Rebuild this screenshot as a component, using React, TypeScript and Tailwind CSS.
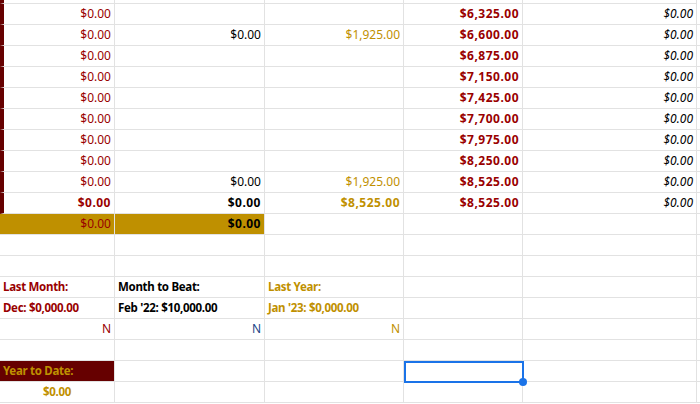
import React from 'react';

const RED = 'text-[#990000]';
const GOLD = 'text-[#bf9000]';

type Cell = { t?: string; c?: string; bg?: string };
type Row = Cell[];

const dCol = ['$6,325.00', '$6,600.00', '$6,875.00', '$7,150.00', '$7,425.00', '$7,700.00', '$7,975.00', '$8,250.00', '$8,525.00', '$8,525.00'];

const plain = 'font-["DejaVu_Sans",sans-serif] text-[12px] text-right';
const bold = 'font-["DejaVu_Sans",sans-serif] font-bold text-[12px] text-right tracking-[0.5px]';
const comic = 'font-["DejaVu_Sans",sans-serif] font-bold text-[11.5px] tracking-[-0.3px]';

const rows: Row[] = [];
for (let i = 0; i < 10; i++) {
  const withBC = i === 1 || i === 8;
  const isTotal = i === 9;
  rows.push([
    { t: '$0.00', c: `${isTotal ? bold : plain} ${RED}` },
    { t: withBC || isTotal ? '$0.00' : '', c: `${isTotal ? bold : plain} text-black` },
    { t: withBC ? '$1,925.00' : isTotal ? '$8,525.00' : '', c: `${isTotal ? bold : plain} ${GOLD}` },
    { t: dCol[i], c: `${bold} ${RED}` },
    { t: '$0.00', c: `${plain} italic text-black` },
  ]);
}

const widths = ['w-[115px]', 'w-[150px]', 'w-[139px]', 'w-[119px]', 'w-[174px]'];

function GridRow({ cells, leftBar }: { cells: Row; leftBar?: boolean }) {
  return (
    <div className="flex h-[21px]">
      {cells.map((cell, i) => (
        <div
          key={i}
          className={`${widths[i]} shrink-0 h-full border-r border-b border-[#e2e2e2] px-[3px] flex items-center ${cell.bg ?? ''} ${i === 0 && leftBar ? 'border-l-[4px] border-l-[#660000]' : ''} ${cell.c ?? ''} ${cell.c?.includes('text-right') ? 'justify-end' : ''}`}
        >
          <span className="whitespace-nowrap">{cell.t}</span>
        </div>
      ))}
      <div className="flex-1 border-b border-[#e2e2e2]" />
    </div>
  );
}

const empty: Row = [{}, {}, {}, {}, {}];

export default function App() {
  return (
    <div className="w-[700px] h-[404px] overflow-hidden bg-white relative">
      <div className="flex h-[4px]">
        {widths.map((w, i) => (
          <div key={i} className={`${w} shrink-0 border-r border-b border-[#e2e2e2] ${i === 0 ? 'border-l-[4px] border-l-[#660000]' : ''}`} />
        ))}
      </div>
      {rows.map((r, i) => (
        <GridRow key={i} cells={r} leftBar />
      ))}
      <GridRow
        cells={[
          { t: '$0.00', c: `${plain} ${RED}`, bg: 'bg-[#bf9000]' },
          { t: '$0.00', c: `${bold} text-black`, bg: 'bg-[#bf9000]' },
          {}, {}, {},
        ]}
      />
      <GridRow cells={empty} />
      <GridRow cells={empty} />
      <GridRow
        cells={[
          { t: 'Last Month:', c: `${comic} ${RED}` },
          { t: 'Month to Beat:', c: `${comic} text-black` },
          { t: 'Last Year:', c: `${comic} ${GOLD}` },
          {}, {},
        ]}
      />
      <GridRow
        cells={[
          { t: 'Dec: $0,000.00', c: `${comic} ${RED}` },
          { t: "Feb '22: $10,000.00", c: `${comic} text-black` },
          { t: "Jan '23: $0,000.00", c: `${comic} ${GOLD}` },
          {}, {},
        ]}
      />
      <GridRow
        cells={[
          { t: 'N', c: `${plain} ${RED} justify-center` },
          { t: 'N', c: `${plain} text-[#1c4587] justify-center` },
          { t: 'N', c: `${plain} ${GOLD} justify-center` },
          {}, {},
        ]}
      />
      <GridRow cells={empty} />
      <GridRow
        cells={[
          { t: 'Year to Date:', c: `${comic} ${GOLD}`, bg: 'bg-[#660000]' },
          {}, {}, {}, {},
        ]}
      />
      <GridRow
        cells={[
          { t: '$0.00', c: `${comic} ${GOLD} justify-center` },
          {}, {}, {}, {},
        ]}
      />
      <div className="absolute left-[404px] top-[361px] w-[120px] h-[22px] border-2 border-[#1a73e8]">
        <div className="absolute -right-[5px] -bottom-[5px] w-[8px] h-[8px] rounded-full bg-[#1a73e8]" />
      </div>
    </div>
  );
}
